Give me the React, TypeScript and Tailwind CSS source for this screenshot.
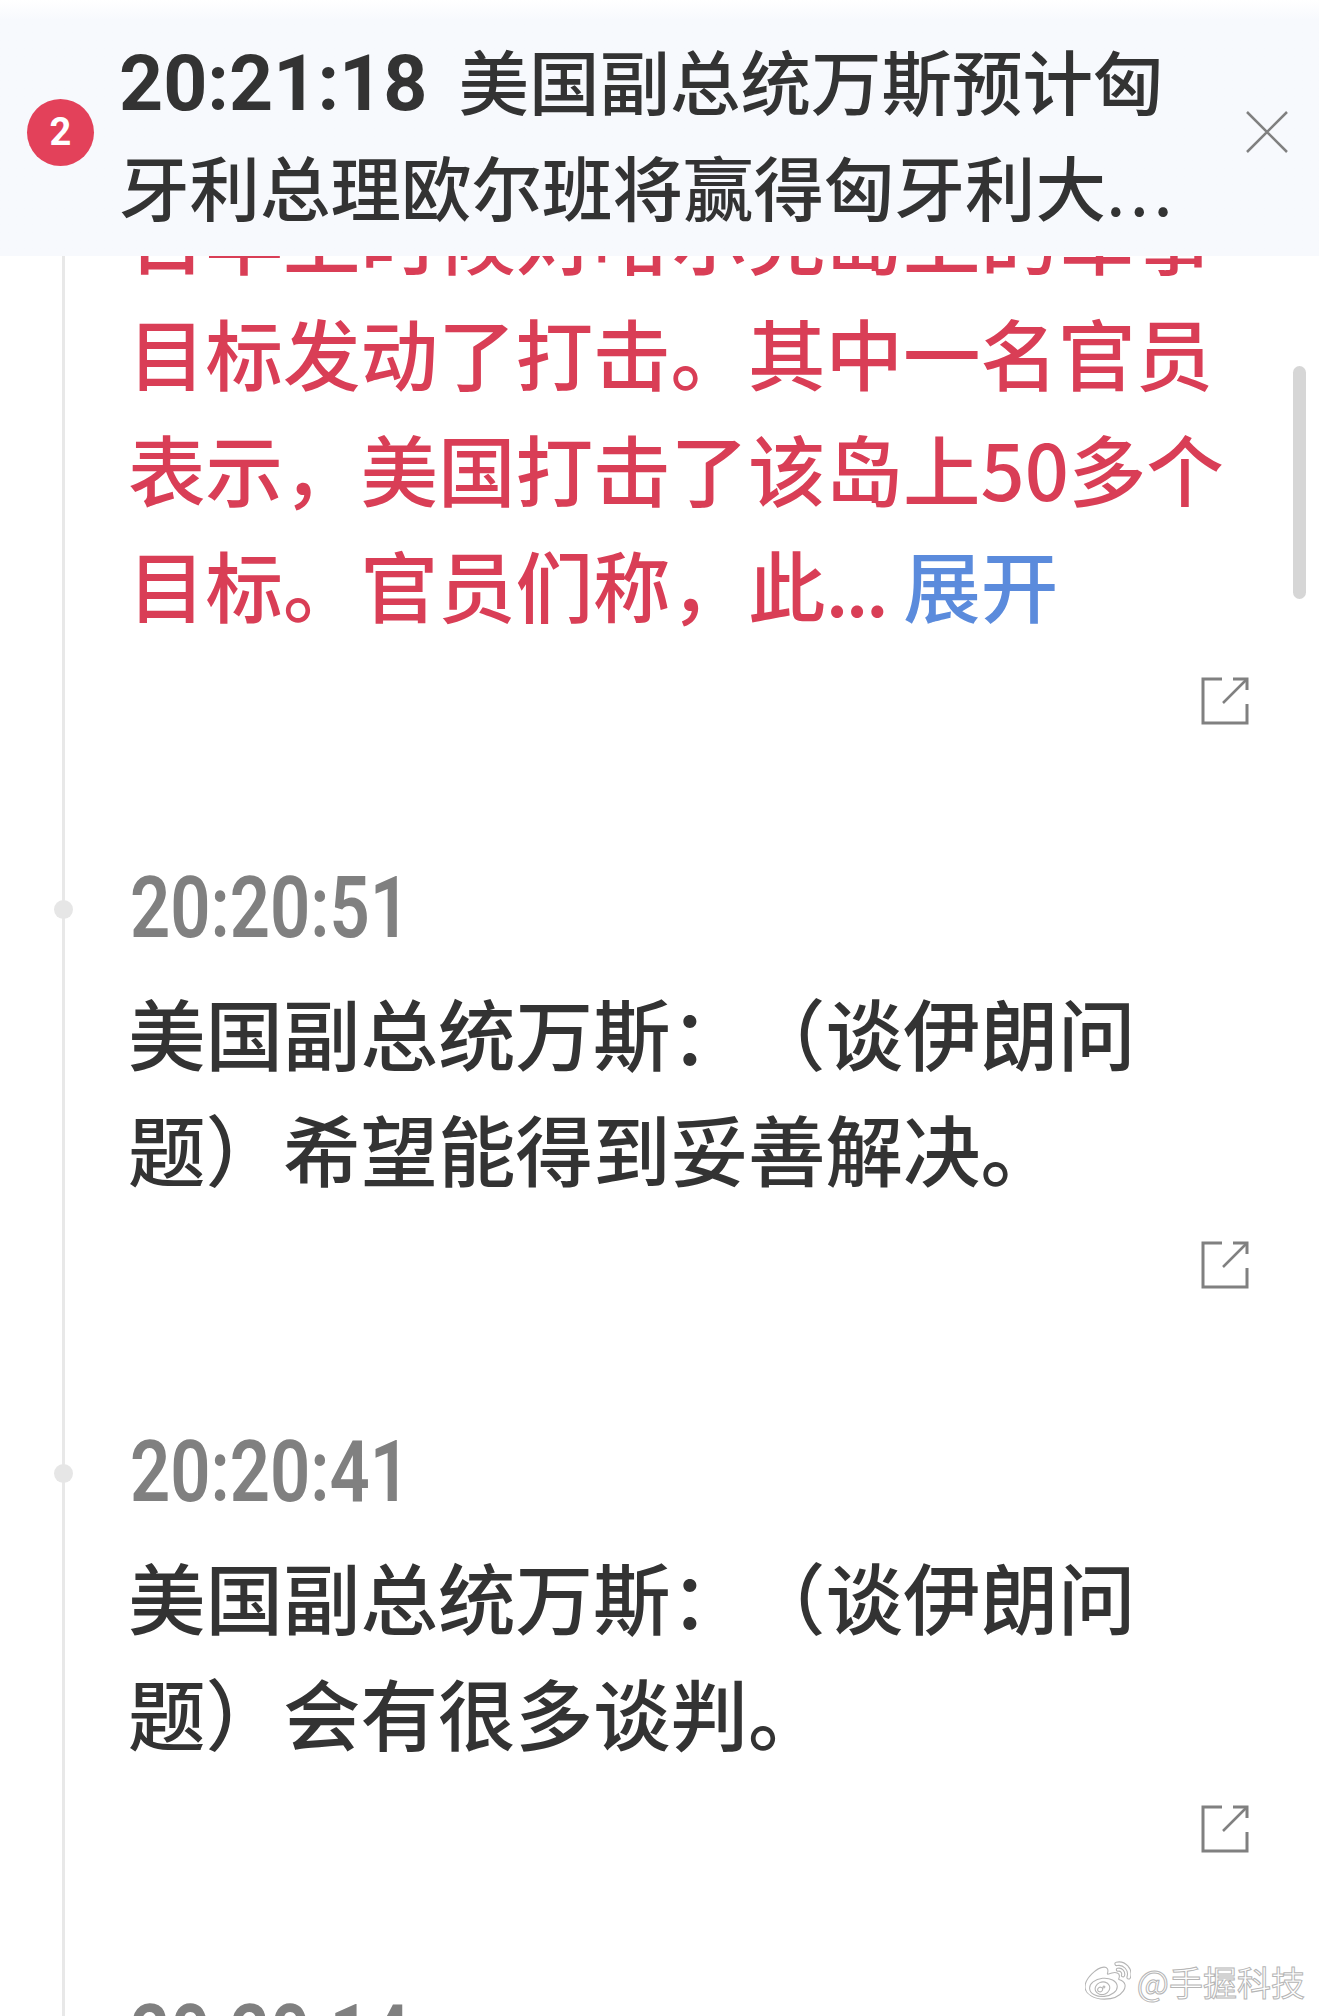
import { FaWeibo } from "react-icons/fa";

const CJK = "font-['Noto_Sans_CJK_SC','Noto_Sans',sans-serif]";

function ShareIcon() {
  return (
    <svg width="48" height="48" viewBox="0 0 48 48" fill="none" stroke="#808080" strokeWidth="3">
      <path d="M21 2H2V46H46V27" />
      <path d="M32 2H46V13" />
      <path d="M46 2L22 26" strokeWidth="2.5" />
    </svg>
  );
}

function Entry({ time, red, children }: { time?: string; red?: boolean; children: React.ReactNode }) {
  return (
    <div className="relative pl-[63px] pb-[132px]">
      {time && (
        <>
          <span className="absolute left-[-11px] top-[43px] h-[19px] w-[19px] rounded-full bg-[#e6e6e6]" />
          <div className="ml-[2px] h-[100px] mb-[16px] leading-[102px] font-['Roboto',sans-serif] font-semibold text-[86px] text-[#808080] origin-left scale-x-[0.82] whitespace-nowrap">
            {time}
          </div>
        </>
      )}
      <p className={`w-[1110px] font-medium text-[77.5px] leading-[116px] [text-spacing-trim:space-all] ${red ? "text-[#d93e56]" : "text-[#333333]"}`}>
        {children}
      </p>
      <div className="mt-[36px] flex justify-end pr-[70px]">
        <ShareIcon />
      </div>
    </div>
  );
}

export default function App() {
  return (
    <div lang="zh-CN" className={`relative h-[2016px] w-[1319px] overflow-hidden bg-white ${CJK}`}>
      <div className="absolute left-0 top-0 z-10 flex h-[256px] w-full items-center bg-gradient-to-b from-white to-[#f7f9fd] to-[8%] pt-[8px]">
        <div className="ml-[27px] flex h-[67px] w-[67px] shrink-0 items-center justify-center rounded-full bg-[#e3415a] font-['Roboto',sans-serif] text-[38px] font-bold text-white">
          2
        </div>
        <p className="ml-[25px] w-[1070px] font-medium text-[70.5px] leading-[106px] text-[#333333]">
          <span className="mr-[31px] font-['Roboto',sans-serif] font-bold text-[77px] leading-none">20:21:18</span>
          美国副总统万斯预计匈牙利总理欧尔班将赢得匈牙利大
          <span className="font-normal tracking-[4px]">...</span>
        </p>
        <svg className="ml-[57px] shrink-0" width="42" height="42" viewBox="0 0 42 42" stroke="#808080" strokeWidth="2.5">
          <path d="M1 1L41 41M41 1L1 41" />
        </svg>
      </div>

      <div className="ml-[62px] border-l-[3px] border-[#e8e8e8] pt-[177px]">
        <Entry red>
          日早上时候对哈尔克岛上的军事目标发动了打击。其中一名官员表示，美国打击了该岛上50多个目标。官员们称，此
          <span className="tracking-[-3px]">...</span>{" "}
          <span className="text-[#5b8bdc]">展开</span>
        </Entry>
        <Entry time="20:20:51">美国副总统万斯：（谈伊朗问题）希望能得到妥善解决。</Entry>
        <Entry time="20:20:41">美国副总统万斯：（谈伊朗问题）会有很多谈判。</Entry>
        <Entry time="20:20:14">美国副总统万斯</Entry>
      </div>

      <div className="absolute left-[1293px] top-[366px] h-[233px] w-[13px] rounded-full bg-[#d6d6d6]" />

      <div className="absolute right-[14px] top-[1957px] flex items-center text-[34px] leading-[50px] text-white [-webkit-text-stroke:1px_#b5b5b5]">
        <FaWeibo className="mr-[6px] h-[46px] w-[46px] stroke-[#b5b5b5] stroke-[12px]" />
        @手握科技
      </div>
    </div>
  );
}
